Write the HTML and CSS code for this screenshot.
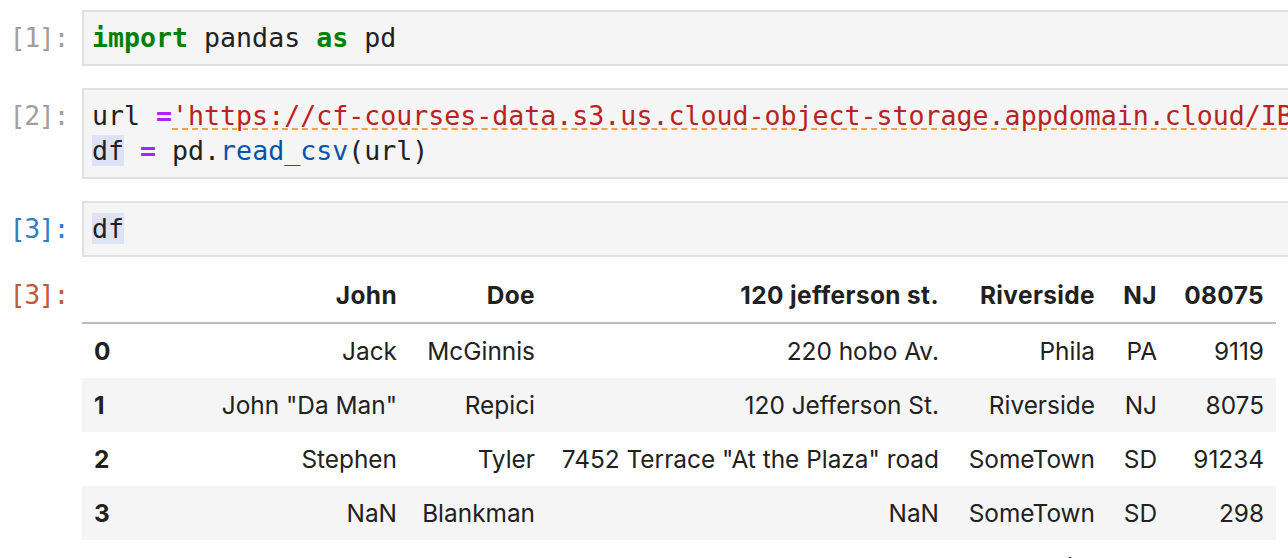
FILE: index.html
```html
<!DOCTYPE html>
<html>
<head>
<meta charset="utf-8">
<link rel="stylesheet" href="styles.css">
</head>
<body>
<div class="notebook">
  <div class="cell">
    <div class="prompt prompt-dim">[1]:</div>
    <div class="editor"><pre class="code"><span class="kw">import</span> pandas <span class="kw">as</span> pd</pre></div>
  </div>
  <div class="cell">
    <div class="prompt prompt-dim">[2]:</div>
    <div class="editor"><pre class="code">url <span class="op">=</span><span class="str lint">'https://cf-courses-data.s3.us.cloud-object-storage.appdomain.cloud/IBMDeveloperSkillsNetwork-PY0101EN-SkillsNetwork/labs/Module%205/data/addresses.csv'</span>
<span class="match">df</span> <span class="op">=</span> pd.<span class="prop">read_csv</span>(url)</pre></div>
  </div>
  <div class="cell">
    <div class="prompt prompt-in">[3]:</div>
    <div class="editor"><pre class="code"><span class="match">df</span></pre></div>
  </div>
  <div class="cell cell-output">
    <div class="prompt prompt-out">[3]:</div>
    <div class="output">
      <table class="frame">
        <colgroup>
          <col class="c-idx"><col class="c-john"><col class="c-doe"><col class="c-addr"><col class="c-city"><col class="c-st"><col class="c-zip">
        </colgroup>
        <thead>
          <tr><th></th><th>John</th><th>Doe</th><th>120 jefferson st.</th><th>Riverside</th><th>NJ</th><th>08075</th></tr>
        </thead>
        <tbody>
          <tr><th>0</th><td>Jack</td><td>McGinnis</td><td>220 hobo Av.</td><td>Phila</td><td>PA</td><td>9119</td></tr>
          <tr><th>1</th><td>John "Da Man"</td><td>Repici</td><td>120 Jefferson St.</td><td>Riverside</td><td>NJ</td><td>8075</td></tr>
          <tr><th>2</th><td>Stephen</td><td>Tyler</td><td>7452 Terrace "At the Plaza" road</td><td>SomeTown</td><td>SD</td><td>91234</td></tr>
          <tr><th>3</th><td>NaN</td><td>Blankman</td><td>NaN</td><td>SomeTown</td><td>SD</td><td>298</td></tr>
          <tr><th>4</th><td>Joan "the bone", Anne</td><td>Jet</td><td>9th, at Terrace plc</td><td>Desert City</td><td>CO</td><td>123</td></tr>
        </tbody>
      </table>
    </div>
  </div>
</div>
</body>
</html>
```
FILE: styles.css
```css
html, body {
  margin: 0;
  padding: 0;
  overflow: hidden;
  background: #ffffff;
}

.notebook {
  width: 1340px;
  padding-top: 10px;
  display: flex;
  flex-direction: column;
  gap: 22px;
}

.cell {
  display: flex;
  align-items: flex-start;
}

.cell-output {
  margin-top: -10px;
}

.prompt {
  flex: 0 0 82px;
  box-sizing: border-box;
  padding-right: 14px;
  padding-top: 10px;
  text-align: right;
  font-family: "DejaVu Sans Mono", monospace;
  font-size: 26.6px;
  line-height: 35px;
  white-space: nowrap;
  letter-spacing: -1.4px;
}

.prompt-dim { color: #a0a0a0; }
.prompt-in { color: #307fc1; }
.prompt-out { color: #bf5b3d; padding-top: 11px; line-height: 30px; }

.editor {
  flex: 1;
  background: #f5f5f5;
  border: 2px solid #e0e0e0;
  padding: 8px 8px 9px 8px;
  overflow: hidden;
}

.code {
  margin: 0;
  font-family: "DejaVu Sans Mono", monospace;
  font-size: 26.6px;
  line-height: 35px;
  color: #212121;
  white-space: pre;
}

.kw { color: #008000; font-weight: bold; }
.op { color: #aa22ff; font-weight: bold; }
.str { color: #ba2121; }
.prop { color: #0055aa; }
.match { background: #dde3f4; }
.lint {
  text-decoration: underline dashed #f5a43a;
  text-decoration-thickness: 2px;
  text-underline-offset: 3px;
}

.output {
  flex: 1;
}

.frame {
  border-collapse: collapse;
  border-spacing: 0;
  table-layout: fixed;
  width: 1194px;
  font-family: "Inter", "Liberation Sans", sans-serif;
  font-size: 24.4px;
  color: #212121;
}

.c-idx { width: 40px; }
.c-john { width: 287px; }
.c-doe { width: 138px; }
.c-addr { width: 404px; }
.c-city { width: 156px; }
.c-st { width: 62px; }
.c-zip { width: 107px; }

.frame th, .frame td {
  padding: 12px;
  text-align: right;
  white-space: nowrap;
  overflow: visible;
}

.frame thead th {
  font-weight: bold;
  line-height: 29px;
  letter-spacing: 0.4px;
  border-bottom: 2px solid #bdbdbd;
}

.frame tbody th, .frame tbody td {
  line-height: 30px;
}

.frame tbody th {
  font-weight: bold;
  text-align: left;
}

.frame td {
  font-weight: normal;
}

.frame tbody tr:nth-child(odd) { background: #ffffff; }
.frame tbody tr:nth-child(even) { background: #f5f5f5; }
```
